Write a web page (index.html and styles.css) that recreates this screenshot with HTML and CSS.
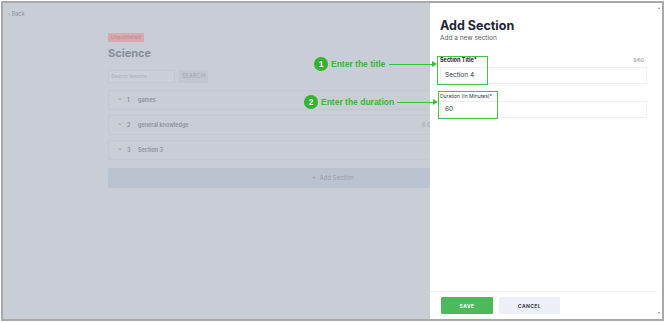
FILE: index.html
```html
<!DOCTYPE html>
<html lang="en">

<head>
    <meta charset="UTF-8">
    <meta name="viewport" content="width=device-width, initial-scale=1.0">
    <title>Add Section</title>
    <link rel="stylesheet" href="styles.css">
</head>

<body>
    <div class="frame">
        <div class="page">
            <div class="back">&lsaquo; Back</div>
            <div class="course">
                <span class="badge">Unpublished</span>
                <h1>Science</h1>
                <div class="search">
                    <div class="search-input">Search lessons</div>
                    <div class="search-btn">SEARCH</div>
                </div>
                <div class="row"><span class="chev">&#8964;</span><span class="num">1</span><span>games</span></div>
                <div class="row"><span class="chev">&#8964;</span><span class="num">2</span><span>general knowledge</span><span class="meta">8 Q</span></div>
                <div class="row"><span class="chev">&#8964;</span><span class="num">3</span><span>Section 3</span></div>
                <div class="add-bar">+&nbsp; Add Section</div>
            </div>
        </div>

        <div class="drawer">
            <div class="drawer-body">
                <h2>Add Section</h2>
                <p class="sub">Add a new section</p>
                <div class="label-row">
                    <span class="label strong">Section Title*</span>
                    <span class="count">9/60</span>
                </div>
                <div class="field">Section 4</div>
                <div class="label-row small">
                    <span class="label">Duration (In Minutes)*</span>
                </div>
                <div class="field">60</div>
            </div>
            <div class="drawer-foot">
                <button class="btn save">SAVE</button>
                <button class="btn cancel">CANCEL</button>
            </div>
            <div class="scrollbar">
                <span class="arrow up"></span>
                <span class="arrow down"></span>
            </div>
        </div>

        <!-- annotations -->
        <div class="hl hl-title"></div>
        <div class="hl hl-duration"></div>
        <div class="note note-1">
            <span class="dot">1</span>
            <span class="note-text">Enter the title</span>
            <span class="line"></span>
            <span class="head"></span>
        </div>
        <div class="note note-2">
            <span class="dot">2</span>
            <span class="note-text">Enter the duration</span>
            <span class="line"></span>
            <span class="head"></span>
        </div>
    </div>
</body>

</html>
```

FILE: styles.css
```css
body {
    margin: 0;
    background: #ffffff;
    font-family: Inter, "Open Sans", sans-serif;
}

.frame {
    position: relative;
    margin: 1px 0 0 1px;
    width: 663px;
    height: 320px;
    box-sizing: border-box;
    border: 2px solid #a9a9ab;
    display: flex;
    overflow: hidden;
}

/* dimmed page behind the drawer */
.page {
    width: 427px;
    flex: none;
    background: #c9cdd5;
    overflow: hidden;
    color: #8d93a1;
}

.back {
    font-size: 5.5px;
    line-height: 7px;
    margin: 8px 0 0 5px;
    color: #8f95a3;
}

.course {
    margin: 15px 0 0 105px;
    width: 450px;
}

.badge {
    display: block;
    width: fit-content;
    background: #d7a9b0;
    color: #c4848c;
    font-size: 5px;
    padding: 2px 3px;
    border-radius: 1px;
    line-height: 5px;
}

h1 {
    margin: 5px 0 0;
    font-size: 11px;
    line-height: 13px;
    font-weight: 700;
    color: #878d9b;
}

.search {
    display: flex;
    gap: 4px;
    margin-top: 10px;
}

.search-input {
    width: 63px;
    height: 11px;
    border: 1px solid #c3c7d0;
    background: #cbcfd7;
    font-size: 5px;
    line-height: 11px;
    padding-left: 2px;
    color: #aab0bb;
}

.search-btn {
    width: 29px;
    height: 13px;
    background: #c2c6cf;
    font-size: 5.5px;
    line-height: 13px;
    text-align: center;
    color: #a0a5b1;
    letter-spacing: 0.2px;
}

.row {
    display: flex;
    align-items: center;
    height: 18px;
    margin-top: 5px;
    border: 1px solid #c3c7d0;
    border-radius: 2px;
    font-size: 5.5px;
    font-weight: 600;
    color: #8b91a0;
}

.search + .row {
    margin-top: 7px;
}

.chev {
    margin-left: 9px;
    width: 9px;
    font-size: 5px;
    line-height: 5px;
    margin-top: -3px;
}

.num {
    width: 11px;
}

.meta {
    margin-left: auto;
    margin-right: 126px;
    font-weight: 400;
    color: #a3a8b4;
}

.add-bar {
    margin-top: 8px;
    height: 20px;
    background: #bcc3d0;
    border-radius: 2px;
    font-size: 6px;
    line-height: 20px;
    text-align: center;
    color: #959cab;
}

/* drawer */
.drawer {
    position: relative;
    flex: 1;
    background: #ffffff;
    display: flex;
    flex-direction: column;
}

.drawer-body {
    flex: 1;
    padding: 15px 15px 0 10px;
}

h2 {
    margin: 0;
    font-size: 12.5px;
    line-height: 15px;
    font-weight: 700;
    color: #222637;
}

.sub {
    margin: 1px 0 0;
    font-size: 6.5px;
    line-height: 9px;
    color: #555a66;
}

.label-row {
    display: flex;
    justify-content: space-between;
    margin-top: 13px;
    font-size: 5.5px;
    line-height: 8px;
}

.label {
    color: #2c3040;
}

.label.strong {
    font-weight: 700;
    color: #1d2130;
}

.count {
    color: #8a8f99;
    margin-right: 3px;
    font-family: "Liberation Sans", Arial, sans-serif;
}

.label-row.small {
    margin-top: 8px;
    font-size: 5px;
}

.field {
    margin-top: 3px;
    height: 17px;
    border: 1px solid #eceef2;
    box-sizing: border-box;
    font-size: 6.5px;
    line-height: 15px;
    padding-left: 4px;
    color: #333845;
}

.label-row.small + .field {
    margin-top: 1px;
}

.drawer-foot {
    display: flex;
    gap: 6px;
    margin-right: 5px;
    padding: 5px 0 5px 11px;
    border-top: 1px solid #eef0f3;
}

.btn {
    height: 17px;
    border: none;
    border-radius: 1px;
    font-family: inherit;
    font-size: 5px;
    font-weight: 700;
    letter-spacing: 0.4px;
    padding: 0;
}

.btn.save {
    width: 52px;
    background: #4cb95b;
    color: #ffffff;
}

.btn.cancel {
    width: 61px;
    background: #edf0f6;
    color: #383d4e;
}

.scrollbar {
    position: absolute;
    top: 0;
    right: 0;
    width: 5px;
    height: 100%;
}

.arrow {
    position: absolute;
    left: 1px;
    width: 0;
    height: 0;
    border-left: 1.5px solid transparent;
    border-right: 1.5px solid transparent;
}

.arrow.up {
    top: 4px;
    border-bottom: 2px solid #8a8a8a;
}

.arrow.down {
    bottom: 5px;
    border-top: 2px solid #8a8a8a;
}

/* green annotation marks */
.hl {
    position: absolute;
    border: 1.5px solid #47c247;
    box-sizing: border-box;
}

.hl-title {
    left: 434px;
    top: 53px;
    width: 51px;
    height: 29px;
}

.hl-duration {
    left: 435px;
    top: 88px;
    width: 60px;
    height: 28px;
}

.note {
    position: absolute;
    display: flex;
    align-items: center;
    font-family: "Liberation Sans", Arial, sans-serif;
}

.note-1 {
    left: 311px;
    top: 54px;
}

.note-2 {
    left: 301px;
    top: 92px;
}

.dot {
    width: 14px;
    height: 14px;
    border-radius: 50%;
    background: #2fb52f;
    color: #ffffff;
    font-size: 8.5px;
    font-weight: 700;
    line-height: 14px;
    text-align: center;
}

.note-text {
    margin-left: 3px;
    font-size: 8.5px;
    font-weight: 700;
    color: #35b835;
}

.line {
    margin-left: 4px;
    height: 1px;
    background: #3cbd3c;
}

.note-1 .line {
    width: 43px;
}

.note-2 .line {
    margin-left: 3px;
    width: 36px;
}

.head {
    width: 0;
    height: 0;
    border-top: 3px solid transparent;
    border-bottom: 3px solid transparent;
    border-left: 5px solid #3cbd3c;
}
```
